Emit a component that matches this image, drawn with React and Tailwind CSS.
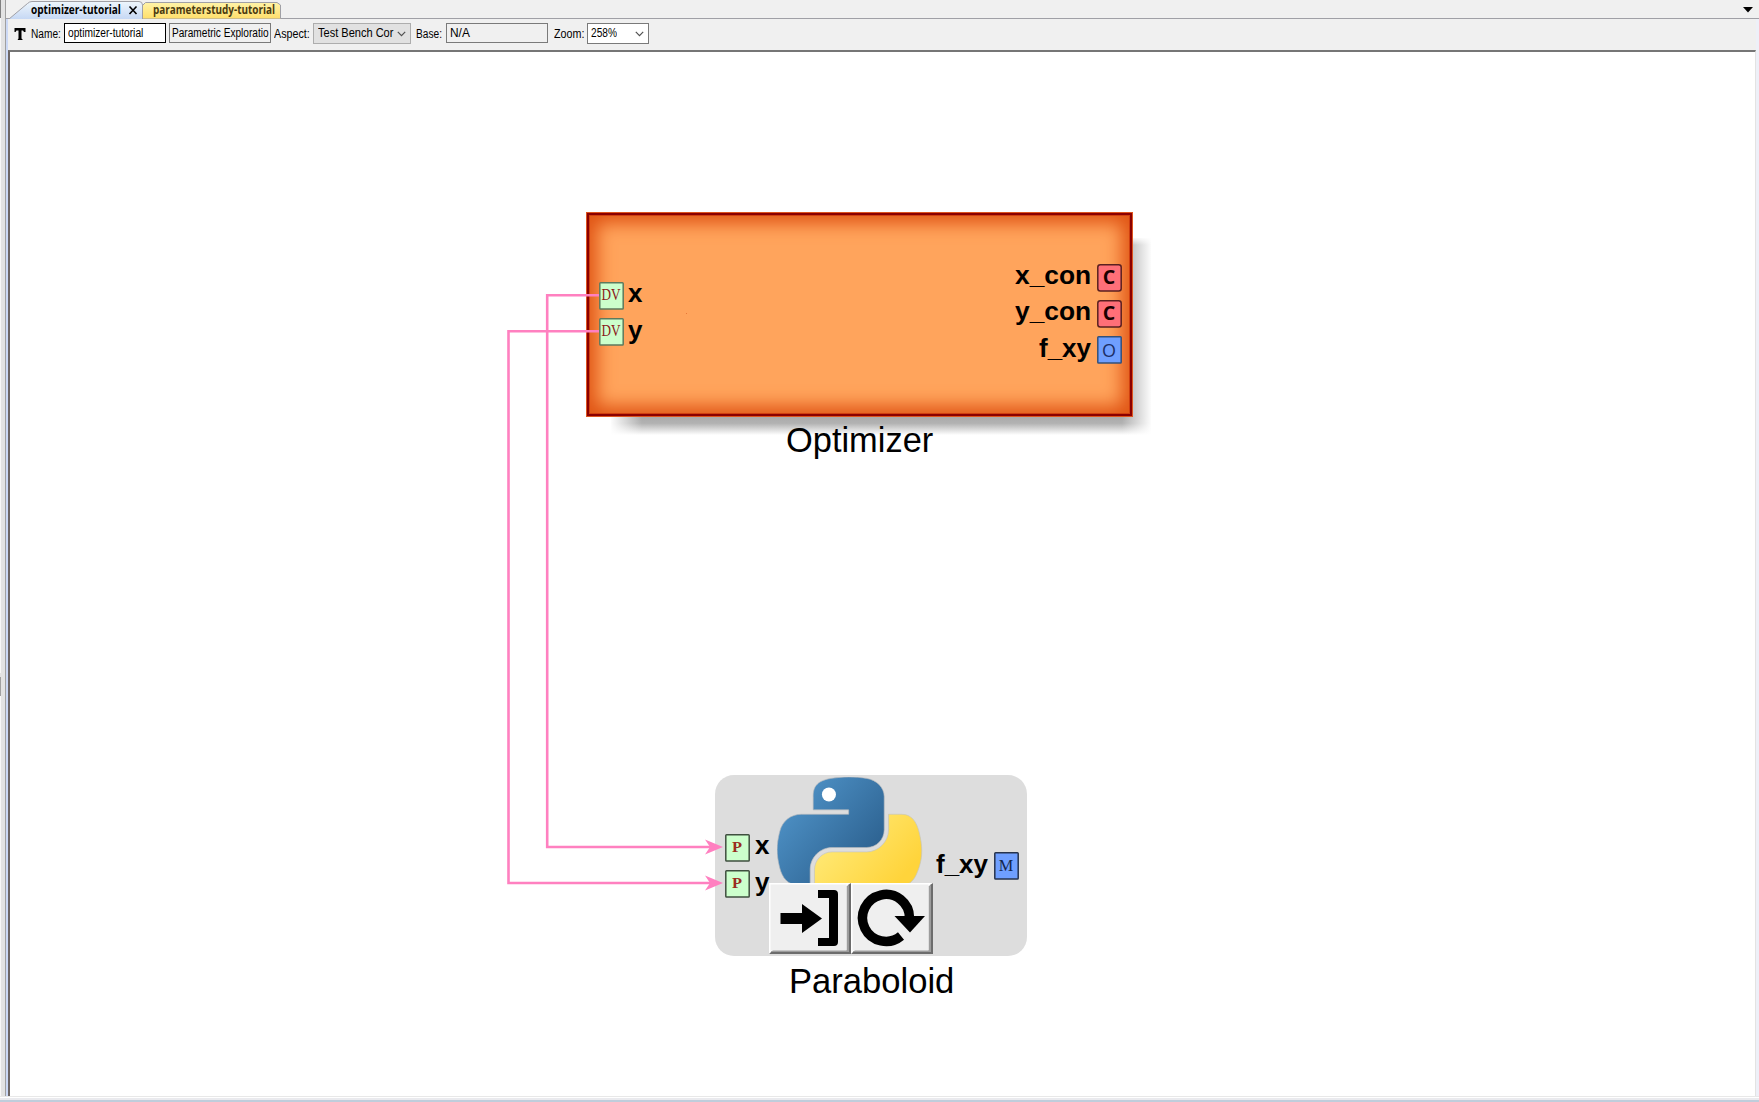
import React from "react";

function Fit({ w, className = "", children }) {
  const ref = React.useRef(null);
  const [s, setS] = React.useState(1);
  React.useLayoutEffect(() => {
    if (ref.current) setS(w / ref.current.offsetWidth);
  }, [w]);
  return (
    <span className="block shrink-0 overflow-visible" style={{ width: w }}>
      <span
        ref={ref}
        className={"inline-block origin-left whitespace-pre " + className}
        style={{ transform: `scaleX(${s})` }}
      >
        {children}
      </span>
    </span>
  );
}

function Chevron() {
  return (
    <svg width="9" height="6" viewBox="0 0 9 6" className="shrink-0">
      <path d="M0.8 0.9 L4.5 4.6 L8.2 0.9" fill="none" stroke="#505050" strokeWidth="1.2" />
    </svg>
  );
}

function TabBar() {
  return (
    <div className="relative flex h-[19px] border-b border-[#a0a0a6] bg-[#f0f0f0]">
      <svg width="280" height="19" viewBox="0 0 280 19" className="absolute left-0 top-0">
        <defs>
          <linearGradient id="tabBlue" x1="0" y1="0" x2="0" y2="1">
            <stop offset="0" stopColor="#eef6fc" />
            <stop offset="1" stopColor="#c6d8f4" />
          </linearGradient>
          <linearGradient id="tabYellow" x1="0" y1="0" x2="0" y2="1">
            <stop offset="0" stopColor="#fff3a8" />
            <stop offset="1" stopColor="#ffdf6c" />
          </linearGradient>
        </defs>
        <path d="M132 18.5 L136.5 15 V5.5 L139.5 2.5 H271 L274.5 5 V18.5" fill="url(#tabYellow)" stroke="#a0a0a6" />
        <path d="M3 19 L21.5 3.5 Q23.5 1.5 26 1.5 H133 Q136.5 1.5 136.5 5 V19" fill="url(#tabBlue)" stroke="#a0a0a6" />
        <path d="M123.5 6.5 L130.5 14 M130.5 6.5 L123.5 14" stroke="#000" strokeWidth="1.6" />
      </svg>
      <div className="relative flex pl-[25px] pt-[1px] font-['Open_Sans',sans-serif] text-[11.5px] font-bold leading-[18px]">
        <Fit w={90}>optimizer-tutorial</Fit>
        <span className="w-[32px]" />
        <Fit w={122} className="text-[#4a3a10]">parameterstudy-tutorial</Fit>
      </div>
      <svg width="10" height="6" viewBox="0 0 10 6" className="absolute right-[6px] top-[7px]">
        <path d="M0 0 H10 L5 5.5 Z" fill="#000" />
      </svg>
    </div>
  );
}

function Toolbar() {
  return (
    <div className="flex h-[31px] items-start bg-[#f0f0f0] pl-[6px] font-['Liberation_Sans',sans-serif] text-[12.5px] leading-[19px] text-black">
      <svg width="12" height="13" viewBox="0 0 12 13" className="mt-[9px] shrink-0">
        <path d="M0.5 0 H11.5 V4 H10 L9 2.5 H7.5 V10.5 L9 12 H3.5 L4.5 10.5 V2.5 H2.5 L1.5 4 H0.5 Z" fill="#000" />
      </svg>
      <div className="ml-[5px] mt-[6px]"><Fit w={30}>Name:</Fit></div>
      <div className="ml-[3px] mt-[4px] h-[20px] w-[102px] border border-black bg-white pl-[3px]"><Fit w={75}>optimizer-tutorial</Fit></div>
      <div className="ml-[3px] mt-[4px] h-[20px] w-[102px] border border-[#7a7a7a] pl-[2px]">
        <Fit w={97}>Parametric Exploratio</Fit>
      </div>
      <div className="ml-[3px] mt-[6px]"><Fit w={36}>Aspect:</Fit></div>
      <div className="ml-[3px] mt-[4px] flex h-[21px] w-[98px] items-center border border-[#adadad] bg-[#e1e1e1] pl-[4px] pr-[4px]">
        <Fit w={75}>Test Bench Cor</Fit>
        <span className="grow" />
        <Chevron />
      </div>
      <div className="ml-[5px] mt-[6px]"><Fit w={26}>Base:</Fit></div>
      <div className="ml-[4px] mt-[4px] h-[20px] w-[102px] border border-[#7a7a7a] pl-[3px]"><Fit w={20}>N/A</Fit></div>
      <div className="ml-[6px] mt-[6px]"><Fit w={30}>Zoom:</Fit></div>
      <div className="ml-[3px] mt-[4px] flex h-[21px] w-[62px] items-start border border-[#7a7a7a] bg-white pl-[3px] pr-[4px]">
        <Fit w={26}>258%</Fit>
        <span className="grow" />
        <div className="pt-[7px]"><Chevron /></div>
      </div>
    </div>
  );
}

const skins = {
  DV: { fill: "#ccffcc", stroke: "#5d7a5d", color: "#8b1a1a", size: 16, weight: 400, family: "Liberation Serif", w: 19, base: 17.8 },
  P: { fill: "#ccffcc", stroke: "#3f4f3f", color: "#9a2a20", size: 15.5, weight: 700, family: "Liberation Serif", w: 10, base: 17.6 },
  C: { fill: "#ff6f78", stroke: "#5a2020", color: "#1a0000", size: 20, weight: 700, family: "Open Sans", w: 12.5, base: 20.2 },
  O: { fill: "#6f9fff", stroke: "#33507a", color: "#1c2f66", size: 19, weight: 400, family: "Open Sans", w: 14, base: 20.5 },
  M: { fill: "#6f9fff", stroke: "#26334d", color: "#14264d", size: 17, weight: 400, family: "Liberation Serif", w: 14.5, base: 19 },
};

function Port({ x, y, kind }) {
  const s = skins[kind];
  return (
    <svg width="25" height="28" viewBox="0 0 25 28" className="absolute" style={{ left: x, top: y }}>
      <rect x="0.8" y="0.8" width="23.4" height="26.2" rx={kind === "C" ? 2.5 : 0.8} fill={s.fill} stroke={s.stroke} strokeWidth="1.5" />
      <text
        x={(24 - s.w) / 2}
        y={s.base}
        textLength={s.w}
        lengthAdjust="spacingAndGlyphs"
        fontFamily={s.family}
        fontWeight={s.weight}
        fontSize={s.size}
        fill={s.color}
      >
        {kind}
      </text>
    </svg>
  );
}

function Label({ x, base, w, children }) {
  return (
    <div
      className="absolute font-['Liberation_Sans',sans-serif] text-[26px] font-bold leading-none text-black"
      style={{ left: x, top: base - 21 }}
    >
      <Fit w={w}>{children}</Fit>
    </div>
  );
}

function Title({ x, base, w, children }) {
  return (
    <div
      className="absolute font-['Liberation_Sans',sans-serif] text-[35px] leading-none text-black"
      style={{ left: x, top: base - 29 }}
    >
      <Fit w={w}>{children}</Fit>
    </div>
  );
}

function OptimizerNode() {
  return (
    <>
      <svg width="570" height="226" viewBox="586 212 570 226" className="absolute left-[576px] top-[160px]">
        <defs>
          <linearGradient id="shadowBottom" x1="0" y1="0" x2="0" y2="1">
            <stop offset="0" stopColor="#aaaaaa" />
            <stop offset="0.35" stopColor="#b2b2b2" />
            <stop offset="1" stopColor="#ffffff" />
          </linearGradient>
          <linearGradient id="fadeLeft" x1="0" y1="0" x2="1" y2="0">
            <stop offset="0" stopColor="#ffffff" />
            <stop offset="1" stopColor="#ffffff" stopOpacity="0" />
          </linearGradient>
          <linearGradient id="fadeRight" x1="1" y1="0" x2="0" y2="0">
            <stop offset="0" stopColor="#ffffff" />
            <stop offset="1" stopColor="#ffffff" stopOpacity="0" />
          </linearGradient>
          <linearGradient id="fadeTop" x1="0" y1="0" x2="0" y2="1">
            <stop offset="0" stopColor="#ffffff" />
            <stop offset="1" stopColor="#ffffff" stopOpacity="0" />
          </linearGradient>
        </defs>
        <rect x="1120" y="238" width="31" height="179" fill="#aaaaaa" />
        <rect x="611" y="417" width="540" height="18" fill="url(#shadowBottom)" />
        <rect x="610" y="416" width="32" height="19" fill="url(#fadeLeft)" />
        <rect x="1122" y="237" width="30" height="198" fill="url(#fadeRight)" />
        <rect x="1122" y="237" width="30" height="8" fill="url(#fadeTop)" />
      </svg>
      <div className="absolute left-[576px] top-[160px] h-[205px] w-[547px] border border-[#dd5520] bg-[#8b0000] p-[2px]">
        <div className="h-full w-full border border-[#d04010] bg-[#ffa45c] shadow-[inset_0_0_18px_7px_#e05414]" />
      </div>
      <div className="absolute left-[676px] top-[261px] h-px w-px bg-[#e87838]" />
    </>
  );
}

function PythonLogo() {
  return (
    <svg width="146" height="147" viewBox="0 0 112 113" className="absolute left-[766.5px] top-[725px]">
      <defs>
        <linearGradient id="pyBlue" x1="0.1" y1="0.15" x2="0.8" y2="0.75"><stop offset="0" stopColor="#4f93c8" /><stop offset="1" stopColor="#2f6594" /></linearGradient>
        <linearGradient id="pyYellow" x1="0.2" y1="0.15" x2="0.75" y2="0.65"><stop offset="0" stopColor="#ffe873" /><stop offset="1" stopColor="#ffd43b" /></linearGradient>
      </defs>
      <path fill="url(#pyBlue)" stroke="#b4b8bc" strokeWidth="0.5" d="M54.919 0C50.335 0.022 45.958 0.413 41.106 1.095C29.760 3.099 27.700 8.295 27.700 15.032V25.251H55V28.657H18.638C10.845 28.657 4.022 33.341 1.888 42.251C-0.574 52.464 -0.683 58.837 1.888 69.501C3.793 77.439 8.345 83.095 16.138 83.095H25.356V70.845C25.356 61.995 33.013 54.188 42.106 54.188H68.888C76.342 54.188 82.294 48.050 82.294 40.563V15.032C82.294 7.766 76.164 2.307 68.888 1.095C64.282 0.328 59.502 -0.020 54.919 0Z" />
      <circle cx="39.8" cy="13.4" r="5.4" fill="#fff" />
      <path fill="url(#pyYellow)" stroke="#c4c4bc" strokeWidth="0.5" d="M85.638 28.657V40.563C85.638 49.794 77.812 57.563 68.888 57.563H42.106C34.770 57.563 28.700 63.842 28.700 71.188V96.720C28.700 103.986 35.019 108.260 42.106 110.345C50.594 112.840 58.733 113.291 68.888 110.345C75.638 108.390 82.294 104.457 82.294 96.720V86.501H55.513V83.095H95.700C103.493 83.095 106.396 77.659 109.106 69.501C111.906 61.102 111.786 53.026 109.106 42.251C107.181 34.494 103.503 28.657 95.700 28.657Z" />
    </svg>
  );
}

function NodeButton({ x, children }) {
  return (
    <svg width="82" height="71" viewBox="0 0 82 71" className="absolute" style={{ left: x, top: 831 }}>
      <rect width="82" height="71" fill="#fff" />
      <path d="M82 0 V71 H0 L3 68 H79 V2 Z" fill="#6c6c6c" />
      <path d="M80 2 V69 H2 L4 67 H77.5 V3 Z" fill="#9c9c9c" />
      <rect x="1.5" y="1.5" width="76" height="66" fill="#efefef" />
      {children}
    </svg>
  );
}

function ParaboloidNode() {
  return (
    <>
      <div className="absolute left-[705px] top-[723px] h-[180.5px] w-[312px] rounded-[19px] bg-[#dddddd]" />
      <PythonLogo />
      <NodeButton x={759}>
        <path d="M11.500 30 H33 V21 L53 35.500 L33 50 V41 H11.500 Z" fill="#000" />
        <path d="M49 7 H65 Q69 7 69 11 V59 Q69 63 65 63 H49 V55 H60 V15 H49 Z" fill="#000" />
      </NodeButton>
      <NodeButton x={841}>
        <path d="M50 53 A23.500 23.500 0 1 1 58.500 35" fill="none" stroke="#000" strokeWidth="9.5" />
        <path d="M43.500 33 H74 L59 49.500 Z" fill="#000" />
      </NodeButton>
    </>
  );
}

function Wires() {
  return (
    <svg width="300" height="630" viewBox="500 280 300 630" className="absolute left-[490px] top-[228px]">
      <g fill="none" stroke="#ff80c0" strokeWidth="2.6">
        <path d="M599 295.200 H547.200 V847 H718" />
        <path d="M599 331.200 H508.500 V883 H718" />
      </g>
      <path d="M705 839.500 L723 847 L705 854.500 L710 847 Z" fill="#ff80c0" />
      <path d="M705 875.500 L723 883 L705 890.500 L710 883 Z" fill="#ff80c0" />
    </svg>
  );
}

function Canvas() {
  return (
    <div className="relative grow overflow-hidden border-l-2 border-t-2 border-r border-l-[#6d6666] border-r-[#e3e3e3] border-t-[#767676] bg-white">
      <OptimizerNode />
      <ParaboloidNode />
      <Wires />
      <Port x={589} y={229.5} kind="DV" />
      <Port x={589} y={265.5} kind="DV" />
      <Port x={1086.5} y={211.5} kind="C" />
      <Port x={1086.5} y={247.5} kind="C" />
      <Port x={1086.5} y={283.5} kind="O" />
      <Port x={715} y={782} kind="P" />
      <Port x={715} y={818} kind="P" />
      <Port x={983.5} y={800} kind="M" />
      <Label x={618} base={249} w={14}>x</Label>
      <Label x={618} base={286} w={14}>y</Label>
      <Label x={1005} base={231} w={76}>x_con</Label>
      <Label x={1005} base={267} w={76}>y_con</Label>
      <Label x={1029} base={304} w={52}>f_xy</Label>
      <Label x={745} base={801} w={14}>x</Label>
      <Label x={745} base={838} w={14}>y</Label>
      <Label x={926} base={820} w={52}>f_xy</Label>
      <Title x={776} base={399} w={147.5}>Optimizer</Title>
      <Title x={779} base={940} w={165}>Paraboloid</Title>
    </div>
  );
}

export default function App() {
  return (
    <div className="flex h-[1102px] w-[1759px] flex-col overflow-hidden bg-[#f0f0f0]">
      <div className="flex h-[1096px]">
        <div className="flex w-[6px] shrink-0 flex-col border-r border-[#a0a0a0] bg-[#e3e3e3]">
          <div className="h-[18px] w-px bg-[#808080]" />
          <div className="h-[655px] w-px bg-[#f8f8f8]" />
          <div className="mt-[4px] h-[19px] w-px bg-[#a0a0a0]" />
          <div className="w-px grow bg-[#f8f8f8]" />
        </div>
        <div className="flex grow flex-col">
          <TabBar />
          <div className="flex grow border-l-2 border-[#ccd9f5]">
            <div className="flex grow flex-col">
              <Toolbar />
              <Canvas />
            </div>
            <div className="w-[3px] bg-[#eef0f8]" />
          </div>
        </div>
      </div>
      <div className="h-[1px] bg-[#e8e8e8]" />
      <div className="h-[1px] bg-white" />
      <div className="h-[2px] bg-[#eaeaee]" />
      <div className="h-[2px] bg-[#bfcddb]" />
    </div>
  );
}
